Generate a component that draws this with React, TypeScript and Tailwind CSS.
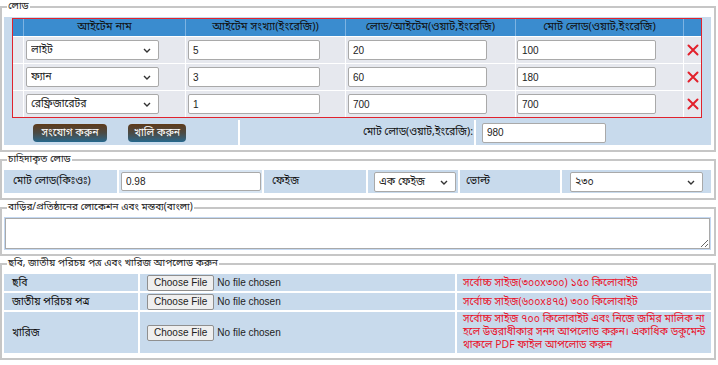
import React from 'react';

const bn = "font-['Vrinda','Noto_Sans_Bengali','Lohit_Bengali','FreeSans',sans-serif]";

const items = [
  { name: 'লাইট', qty: '5', load: '20', total: '100' },
  { name: 'ফ্যান', qty: '3', load: '60', total: '180' },
  { name: 'রেফ্রিজারেটর', qty: '1', load: '700', total: '700' },
];

function RedX() {
  return (
    <svg width="12" height="12" viewBox="0 0 12 12" className="text-[#e2202b]">
      <path d="M1.5 1.5 L10.5 10.5 M10.5 1.5 L1.5 10.5" stroke="currentColor" strokeWidth="2" strokeLinecap="round" />
    </svg>
  );
}

function Fieldset({ title, children, className = '' }: { title: string; children: React.ReactNode; className?: string }) {
  return (
    <fieldset className={`border-2 border-[#c6c6c6] pl-[2px] pr-[3px] pt-1 pb-[5px] ${className}`}>
      <legend className="ml-[3px] px-px text-[10px] leading-[13px] text-[#222]">{title}</legend>
      {children}
    </fieldset>
  );
}

// select with a thin chevron like the original page
function Select({ value, className }: { value: string; className: string }) {
  return (
    <div className={`relative h-5 ${className}`}>
      <select
        className="block appearance-none w-full h-5 border border-[#a9a9a9] rounded-[2px] bg-white pl-1 text-[10.5px] leading-[18px] text-[#222] outline-none"
        defaultValue={value}
      >
        <option>{value}</option>
      </select>
      <svg width="8" height="5" viewBox="0 0 8 5" className="absolute right-[8px] top-[8px] pointer-events-none text-[#333]">
        <path d="M1 1 L4 4 L7 1" fill="none" stroke="currentColor" strokeWidth="1.4" />
      </svg>
    </div>
  );
}

const inputCls = 'h-5 border border-[#a9a9a9] rounded-[2px] bg-white px-1 text-[10px] text-[#222] font-[Liberation_Sans,Arial,sans-serif] outline-none';
const fileCls = 'text-[10px] leading-[14px] text-[#222] font-[Liberation_Sans,Arial,sans-serif] file:mr-[3px] file:h-[16px] file:border file:border-[#8f8f8f] file:rounded-[2px] file:bg-[#efefef] file:px-1.5 file:text-[10px] file:text-[#222]';
const btnCls = 'h-[18px] rounded-[4px] bg-linear-to-b from-[#5e3a18] via-[#4a4a44] to-[#22678c] text-white text-[10.5px] leading-[18px] text-center';

export default function App() {
  return (
    <div className={`w-[716px] bg-white ${bn}`}>
      {/* Load */}
      <Fieldset title="লোড">
        <div className="bg-[#c8daec] flex flex-col gap-0.5 pt-px">
          <div className="pl-2 pr-[9px]">
            <div className="border border-[#e0232d]">
              <div className="grid grid-cols-[10px_162px_160px_170px_168px_1fr] bg-[#3a8ccf] h-[17px] text-[11px] leading-[17px] text-[#111] text-center">
                <div />
                <div className="border-l border-[#7db3e2]">আইটেম নাম</div>
                <div className="border-l border-[#7db3e2]">আইটেম সংখ্যা(ইংরেজি))</div>
                <div className="border-l border-[#7db3e2]">লোড/আইটেম(ওয়াট,ইংরেজি)</div>
                <div className="border-l border-[#7db3e2]">মোট লোড(ওয়াট,ইংরেজি)</div>
                <div className="border-l border-[#7db3e2]" />
              </div>
              {items.map((it) => (
                <div key={it.name} className="grid grid-cols-[10px_162px_160px_170px_168px_1fr] bg-[#e6e8ee] h-[27px] border-t border-white items-center">
                  <div className="h-full" />
                  <div className="h-full border-l border-white flex items-center pl-[2px]">
                    <Select value={it.name} className="w-[133px]" />
                  </div>
                  <div className="h-full border-l border-white flex items-center pl-[2px]">
                    <input className={`${inputCls} w-[132px]`} defaultValue={it.qty} />
                  </div>
                  <div className="h-full border-l border-white flex items-center pl-[2px]">
                    <input className={`${inputCls} w-[139px]`} defaultValue={it.load} />
                  </div>
                  <div className="h-full border-l border-white flex items-center pl-px">
                    <input className={`${inputCls} w-[139px]`} defaultValue={it.total} />
                  </div>
                  <div className="h-full border-l border-white flex items-center justify-center">
                    <RedX />
                  </div>
                </div>
              ))}
            </div>
          </div>
          <div className="grid grid-cols-[234px_234px_1fr] gap-0.5 h-[25px] bg-white">
            <div className="bg-[#c8daec] flex items-center pl-[29px] gap-[21px]">
              <button className={`${btnCls} w-[74px]`}>সংযোগ করুন</button>
              <button className={`${btnCls} w-[58px]`}>খালি করুন</button>
            </div>
            <div className="bg-[#c8daec] flex items-center justify-end pr-px text-[10.5px] text-[#111]">মোট লোড(ওয়াট,ইংরেজি):</div>
            <div className="bg-[#c8daec] flex items-center pl-1.5">
              <input className={`${inputCls} w-[124px]`} defaultValue="980" />
            </div>
          </div>
        </div>
      </Fieldset>

      {/* Demand load */}
      <Fieldset title="চাহিদাকৃত লোড" className="mt-px">
        <div className="grid grid-cols-[113px_143px_102px_90px_100px_1fr] gap-0.5 h-[23px] text-[10.5px] text-[#111]">
          <div className="bg-[#c8daec] flex items-center pl-[9px]">মোট লোড(কিঃওঃ)</div>
          <div className="bg-[#d8e5f2] flex items-center pl-[2px]">
            <input className={`${inputCls} w-[140px] h-[19px]`} defaultValue="0.98" />
          </div>
          <div className="bg-[#c8daec] flex items-center pl-[8px]">ফেইজ</div>
          <div className="bg-[#c8daec] flex items-center pl-[6px]">
            <Select value="এক ফেইজ" className="w-[82px]" />
          </div>
          <div className="bg-[#c8daec] flex items-center pl-[6px]">ভোল্ট</div>
          <div className="bg-[#c8daec] flex items-center pl-[8px]">
            <Select value="২৩০" className="w-[133px]" />
          </div>
        </div>
      </Fieldset>

      {/* Location */}
      <Fieldset title="বাড়ির/প্রতিষ্ঠানের লোকেশন এবং মন্তব্য(বাংলা)" className="mt-px">
        <div className="pl-px pr-px">
          <textarea className="block w-full h-[31px] border border-[#a9a9a9] ring-1 ring-[#c3d8f2] bg-white text-[10.5px] outline-none" />
        </div>
      </Fieldset>

      {/* Uploads */}
      <Fieldset title="ছবি, জাতীয় পরিচয় পত্র এবং খারিজ আপলোড করুন" className="mt-px">
        <div className="grid grid-cols-[134px_315px_1fr] gap-0.5 text-[10.5px] leading-[14px] text-[#111]">
          <div className="bg-[#c8daec] h-[17px] flex items-center pl-2">ছবি</div>
          <div className="bg-[#c8daec] h-[17px] flex items-center pl-[7px]"><input type="file" className={fileCls} /></div>
          <div className="bg-[#c8daec] h-[17px] flex items-center pl-[6px] whitespace-nowrap text-[#e8142c]">সর্বোচ্চ সাইজ(৩০০x৩০০) ১৫০ কিলোবাইট</div>

          <div className="bg-[#c8daec] h-[17px] flex items-center pl-2">জাতীয় পরিচয় পত্র</div>
          <div className="bg-[#c8daec] h-[17px] flex items-center pl-[7px]"><input type="file" className={fileCls} /></div>
          <div className="bg-[#c8daec] h-[17px] flex items-center pl-[6px] whitespace-nowrap text-[#e8142c]">সর্বোচ্চ সাইজ(৬০০x৪৭৫) ৩০০ কিলোবাইট</div>

          <div className="bg-[#c8daec] h-[41px] flex items-center pl-2">খারিজ</div>
          <div className="bg-[#c8daec] h-[41px] flex items-center pl-[7px]"><input type="file" className={fileCls} /></div>
          <div className="bg-[#c8daec] h-[41px] flex flex-col justify-center pl-[6px] leading-[13px] whitespace-nowrap text-[#e8142c]">
            <span>সর্বোচ্চ সাইজ ৭০০ কিলোবাইট এবং নিজে জমির মালিক না</span>
            <span>হলে উত্তরাধীকার সনদ আপলোড করুন। একাধিক ডকুমেন্ট</span>
            <span>থাকলে PDF ফাইল আপলোড করুন</span>
          </div>
        </div>
      </Fieldset>
    </div>
  );
}
